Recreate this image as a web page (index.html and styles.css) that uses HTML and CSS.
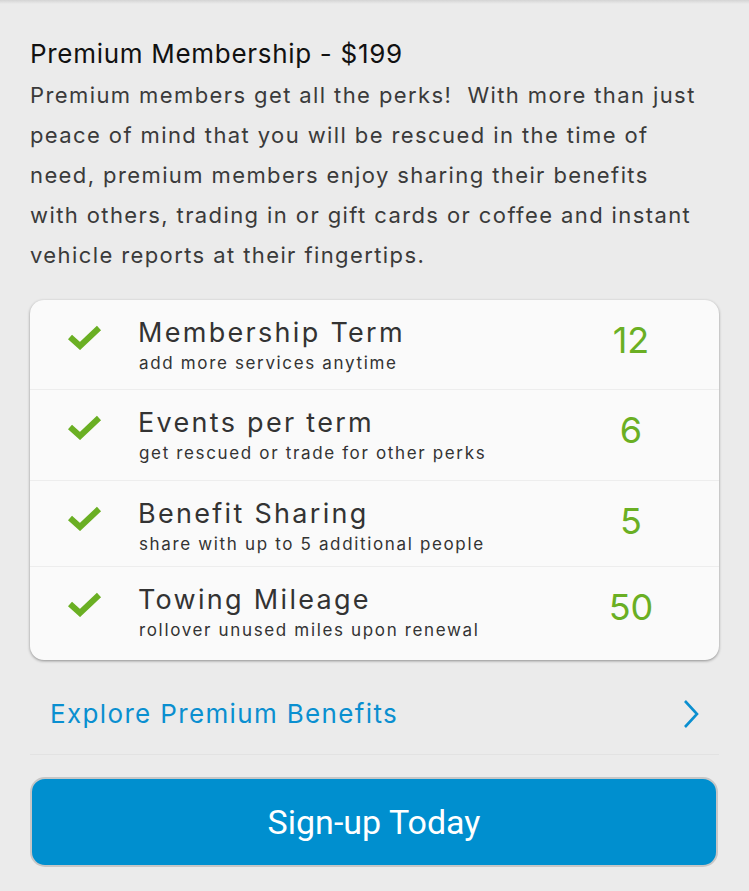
FILE: index.html
```html
<!DOCTYPE html>
<html lang="en">
<head>
<meta charset="utf-8">
<title>Premium Membership</title>
<link rel="stylesheet" href="styles.css">
</head>
<body>
<main class="page">
  <h1 class="plan-title">Premium Membership - $199</h1>
  <p class="plan-desc">Premium members get all the perks!&nbsp; With more than just peace of mind that you will be rescued in the time of need, premium members enjoy sharing their benefits with others, trading in or gift cards or coffee and instant vehicle reports at their fingertips.</p>

  <section class="card">
    <div class="row">
      <svg class="check" viewBox="0 0 34 26"><path d="M2 13 L12 22 L31 4" fill="none" stroke="#6aaf23" stroke-width="6" stroke-linejoin="miter"/></svg>
      <div class="row-text">
        <div class="row-title">Membership Term</div>
        <div class="row-sub">add more services anytime</div>
      </div>
      <div class="row-num">12</div>
    </div>
    <div class="row">
      <svg class="check" viewBox="0 0 34 26"><path d="M2 13 L12 22 L31 4" fill="none" stroke="#6aaf23" stroke-width="6" stroke-linejoin="miter"/></svg>
      <div class="row-text">
        <div class="row-title">Events per term</div>
        <div class="row-sub">get rescued or trade for other perks</div>
      </div>
      <div class="row-num">6</div>
    </div>
    <div class="row">
      <svg class="check" viewBox="0 0 34 26"><path d="M2 13 L12 22 L31 4" fill="none" stroke="#6aaf23" stroke-width="6" stroke-linejoin="miter"/></svg>
      <div class="row-text">
        <div class="row-title">Benefit Sharing</div>
        <div class="row-sub">share with up to 5 additional people</div>
      </div>
      <div class="row-num">5</div>
    </div>
    <div class="row">
      <svg class="check" viewBox="0 0 34 26"><path d="M2 13 L12 22 L31 4" fill="none" stroke="#6aaf23" stroke-width="6" stroke-linejoin="miter"/></svg>
      <div class="row-text">
        <div class="row-title">Towing Mileage</div>
        <div class="row-sub">rollover unused miles upon renewal</div>
      </div>
      <div class="row-num">50</div>
    </div>
  </section>

  <a class="explore" href="#">
    <span>Explore Premium Benefits</span>
    <svg class="chevron" viewBox="0 0 18 30"><path d="M3 2 L15 15 L3 28" fill="none" stroke="#0a8fd0" stroke-width="2.6"/></svg>
  </a>

  <button class="signup" type="button">Sign-up Today</button>
</main>
</body>
</html>
```

FILE: styles.css
```css
html, body {
  margin: 0;
  padding: 0;
}
body {
  background: #ebebeb;
  font-family: Inter, Roboto, "Liberation Sans", sans-serif;
  color: #333;
}
.page {
  min-height: 891px;
  box-sizing: border-box;
  padding: 39px 30px 0;
  background: linear-gradient(#d4d4d4, #ebebeb 4px);
}
.plan-title {
  margin: 0;
  font-size: 26px;
  line-height: 30px;
  font-weight: 400;
  letter-spacing: 0.7px;
  color: #111;
}
.plan-desc {
  margin: 6px 0 0;
  padding-right: 19px;
  font-size: 22px;
  line-height: 40px;
  letter-spacing: 1.4px;
  color: #3a3a3a;
}
.card {
  margin-top: 25px;
  background: #fafafa;
  border-radius: 14px;
  box-shadow: 0 1px 3px rgba(0,0,0,0.4);
  overflow: hidden;
}
.row {
  display: grid;
  grid-template-columns: 108px 1fr 120px;
  align-items: start;
  height: 90px;
  box-sizing: border-box;
  padding: 18px 28px 0 0;
  border-bottom: 1px solid #ededed;
}
.row:nth-child(2) { height: 91px; }
.row:nth-child(3) { height: 86px; }
.row:last-child { height: 93px; border-bottom: none; }
.check {
  width: 34px;
  height: 26px;
  margin: 6px 0 0 38px;
}
.row-title {
  font-size: 27px;
  line-height: 30px;
  letter-spacing: 2.3px;
  color: #333;
}
.row-sub {
  margin-top: 2px;
  padding-left: 1px;
  font-size: 17px;
  line-height: 26px;
  letter-spacing: 1.65px;
  color: #333;
}
.row-num {
  margin-top: 2px;
  text-align: center;
  font-size: 36px;
  line-height: 40px;
  color: #6aaf23;
}
.explore {
  display: flex;
  justify-content: space-between;
  align-items: center;
  padding: 39px 19px 25px 20px;
  border-bottom: 1px solid #e2e2e2;
  text-decoration: none;
  color: #0a8fd0;
  font-size: 26px;
  line-height: 30px;
  letter-spacing: 1.35px;
}
.chevron {
  width: 18px;
  height: 30px;
}
.signup {
  display: flex;
  align-items: center;
  justify-content: center;
  width: 688px;
  height: 90px;
  margin-top: 22px;
  background: #008fcf;
  border: 2px solid #c6c6c6;
  border-radius: 15px;
  color: #fff;
  font-family: Roboto, "Liberation Sans", sans-serif;
  font-size: 34px;
  font-weight: 400;
}
```
